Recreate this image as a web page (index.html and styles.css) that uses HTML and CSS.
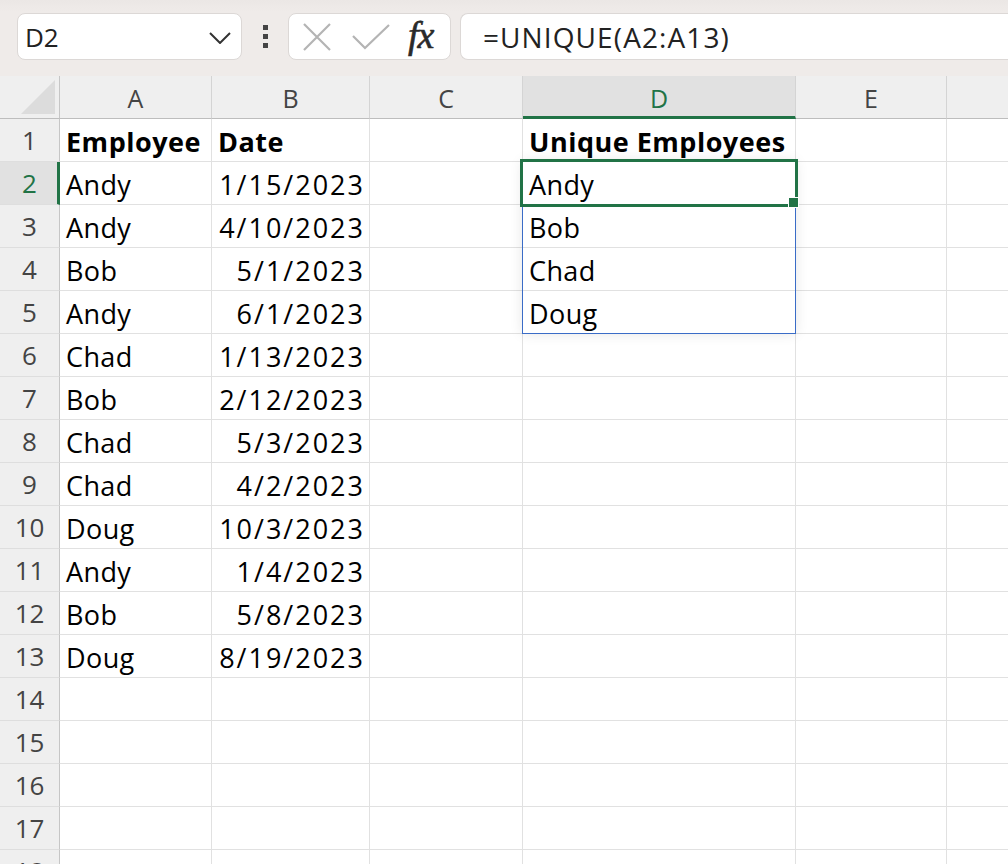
FILE: index.html
```html
<!DOCTYPE html>
<html>
<head>
<meta charset="utf-8">
<link rel="stylesheet" href="styles.css">
</head>
<body>
<div class="toolbar">
  <div class="namebox">
    <span class="name">D2</span>
    <svg class="chev" width="22" height="12" viewBox="0 0 22 12"><path d="M1 1 L11 11 L21 1" fill="none" stroke="#333" stroke-width="2"/></svg>
  </div>
  <div class="dots"><i></i><i></i><i></i></div>
  <div class="fxbox">
    <svg width="30" height="28" viewBox="0 0 30 28"><path d="M2 1 L28 27 M28 1 L2 27" stroke="#b4b4b4" stroke-width="2.2" fill="none"/></svg>
    <svg width="38" height="26" viewBox="0 0 38 26"><path d="M1 12 L13 24 L37 1" stroke="#b4b4b4" stroke-width="2.2" fill="none"/></svg>
    <span class="fx">fx</span>
  </div>
  <div class="formula">=UNIQUE(A2:A13)</div>
</div>
<div class="sheet">
  <div class="grid">
    <div class="corner"><span class="tri"></span></div>
    <div class="ch">A</div><div class="ch">B</div><div class="ch">C</div><div class="ch sel">D</div><div class="ch">E</div><div class="ch last"></div>

    <div class="rh">1</div><div class="c b">Employee</div><div class="c b">Date</div><div class="c"></div><div class="c b">Unique Employees</div><div class="c"></div><div class="c last"></div>
    <div class="rh sel">2</div><div class="c">Andy</div><div class="c r">1/15/2023</div><div class="c"></div><div class="c">Andy</div><div class="c"></div><div class="c last"></div>
    <div class="rh">3</div><div class="c">Andy</div><div class="c r">4/10/2023</div><div class="c"></div><div class="c">Bob</div><div class="c"></div><div class="c last"></div>
    <div class="rh">4</div><div class="c">Bob</div><div class="c r">5/1/2023</div><div class="c"></div><div class="c">Chad</div><div class="c"></div><div class="c last"></div>
    <div class="rh">5</div><div class="c">Andy</div><div class="c r">6/1/2023</div><div class="c"></div><div class="c">Doug</div><div class="c"></div><div class="c last"></div>
    <div class="rh">6</div><div class="c">Chad</div><div class="c r">1/13/2023</div><div class="c"></div><div class="c"></div><div class="c"></div><div class="c last"></div>
    <div class="rh">7</div><div class="c">Bob</div><div class="c r">2/12/2023</div><div class="c"></div><div class="c"></div><div class="c"></div><div class="c last"></div>
    <div class="rh">8</div><div class="c">Chad</div><div class="c r">5/3/2023</div><div class="c"></div><div class="c"></div><div class="c"></div><div class="c last"></div>
    <div class="rh">9</div><div class="c">Chad</div><div class="c r">4/2/2023</div><div class="c"></div><div class="c"></div><div class="c"></div><div class="c last"></div>
    <div class="rh">10</div><div class="c">Doug</div><div class="c r">10/3/2023</div><div class="c"></div><div class="c"></div><div class="c"></div><div class="c last"></div>
    <div class="rh">11</div><div class="c">Andy</div><div class="c r">1/4/2023</div><div class="c"></div><div class="c"></div><div class="c"></div><div class="c last"></div>
    <div class="rh">12</div><div class="c">Bob</div><div class="c r">5/8/2023</div><div class="c"></div><div class="c"></div><div class="c"></div><div class="c last"></div>
    <div class="rh">13</div><div class="c">Doug</div><div class="c r">8/19/2023</div><div class="c"></div><div class="c"></div><div class="c"></div><div class="c last"></div>
    <div class="rh">14</div><div class="c"></div><div class="c"></div><div class="c"></div><div class="c"></div><div class="c"></div><div class="c last"></div>
    <div class="rh">15</div><div class="c"></div><div class="c"></div><div class="c"></div><div class="c"></div><div class="c"></div><div class="c last"></div>
    <div class="rh">16</div><div class="c"></div><div class="c"></div><div class="c"></div><div class="c"></div><div class="c"></div><div class="c last"></div>
    <div class="rh">17</div><div class="c"></div><div class="c"></div><div class="c"></div><div class="c"></div><div class="c"></div><div class="c last"></div>
    <div class="rh">18</div><div class="c"></div><div class="c"></div><div class="c"></div><div class="c"></div><div class="c"></div><div class="c last"></div>
  </div>
  <div class="spill"></div>
  <div class="active"><span class="handle"></span></div>
</div>
</body>
</html>
```

FILE: styles.css
```css
* { box-sizing: border-box; }
html, body { margin: 0; padding: 0; }
body {
  width: 1008px;
  height: 864px;
  overflow: hidden;
  background: #ffffff;
  font-family: "Open Sans", "Noto Sans", sans-serif;
  color: #000;
}
.toolbar {
  height: 76px;
  background: linear-gradient(#ebe7e5, #efebe9 12px, #efebe9);
  display: flex;
  align-items: flex-start;
  padding: 13px 0 0 17px;
}
.namebox, .fxbox, .formula {
  height: 47px;
  background: #fff;
  border: 1px solid #dcd8d6;
  border-radius: 8px;
}
.namebox {
  width: 225px;
  display: flex;
  align-items: center;
  justify-content: space-between;
  padding: 0 10px 0 7px;
}
.name { font-size: 26px; color: #222; }
.chev { margin-top: 2px; }
.dots {
  width: 46px;
  height: 47px;
  display: flex;
  flex-direction: column;
  align-items: center;
  justify-content: center;
  gap: 4px;
}
.dots i {
  display: block;
  width: 5px;
  height: 5px;
  background: #444;
}
.fxbox {
  width: 163px;
  display: flex;
  align-items: center;
  padding: 0 10px 0 13px;
  gap: 20px;
}
.fx {
  font-family: "Liberation Serif", "DejaVu Serif", serif;
  font-style: italic;
  font-size: 38px;
  color: #2a2a2a;
  margin-left: -2px;
  letter-spacing: -1px;
  line-height: 1;
  margin-top: -4px;
  -webkit-text-stroke: 0.6px #2a2a2a;
}
.formula {
  flex: 1;
  margin-left: 9px;
  border-right: none;
  border-radius: 8px 0 0 8px;
  font-size: 28px;
  letter-spacing: 1.1px;
  color: #222;
  display: flex;
  align-items: center;
  padding-left: 22px;
}
.sheet {
  position: relative;
}
.grid {
  display: grid;
  grid-template-columns: 60px 152px 158px 153px 273px 151px 1fr;
  grid-auto-rows: 43px;
}
.corner {
  background: #efefef;
  border-right: 1px solid #c6c6c6;
  border-bottom: 1px solid #bdbdbd;
  position: relative;
}
.tri {
  position: absolute;
  right: 4px;
  bottom: 4px;
  width: 0;
  height: 0;
  border-left: 34px solid transparent;
  border-bottom: 34px solid #dcdcdc;
}
.ch {
  background: #efefef;
  border-right: 1px solid #d4d4d4;
  border-bottom: 1px solid #bdbdbd;
  display: flex;
  align-items: center;
  justify-content: center;
  font-size: 25px;
  color: #444;
  padding-top: 2px;
}
.ch.sel {
  background: #e1e1e1;
  color: #217346;
  border-bottom: 3px solid #217346;
  padding-top: 4px;
}
.ch.last { border-right: none; }
.rh {
  background: #efefef;
  border-right: 1px solid #c6c6c6;
  border-bottom: 1px solid #dedede;
  display: flex;
  align-items: center;
  justify-content: center;
  font-size: 26px;
  color: #444;
}
.rh.sel {
  background: #e1e1e1;
  color: #217346;
  border-right: 3px solid #217346;
  padding-left: 2px;
}
.c {
  border-right: 1px solid #e1e1e1;
  border-bottom: 1px solid #e1e1e1;
  display: flex;
  align-items: center;
  padding: 2px 6px 0 6px;
  font-size: 27px;
  letter-spacing: 0.4px;
  white-space: nowrap;
  overflow: visible;
}
.c.last { border-right: none; }
.c.b { font-weight: 700; letter-spacing: 0.5px; }
.c.r { justify-content: flex-end; letter-spacing: 2px; padding-right: 4px; }
.spill {
  position: absolute;
  left: 522px;
  top: 85px;
  width: 274px;
  height: 173px;
  border: 1px solid #3a6cc7;
  box-shadow: 0 0 12px rgba(0,0,0,0.10);
  pointer-events: none;
}
.active {
  position: absolute;
  left: 520px;
  top: 83px;
  width: 278px;
  height: 48px;
  border: 3px solid #217346;
}
.handle {
  position: absolute;
  right: -3px;
  bottom: -3px;
  width: 9px;
  height: 9px;
  background: #217346;
  outline: 1px solid #fff;
}
```
